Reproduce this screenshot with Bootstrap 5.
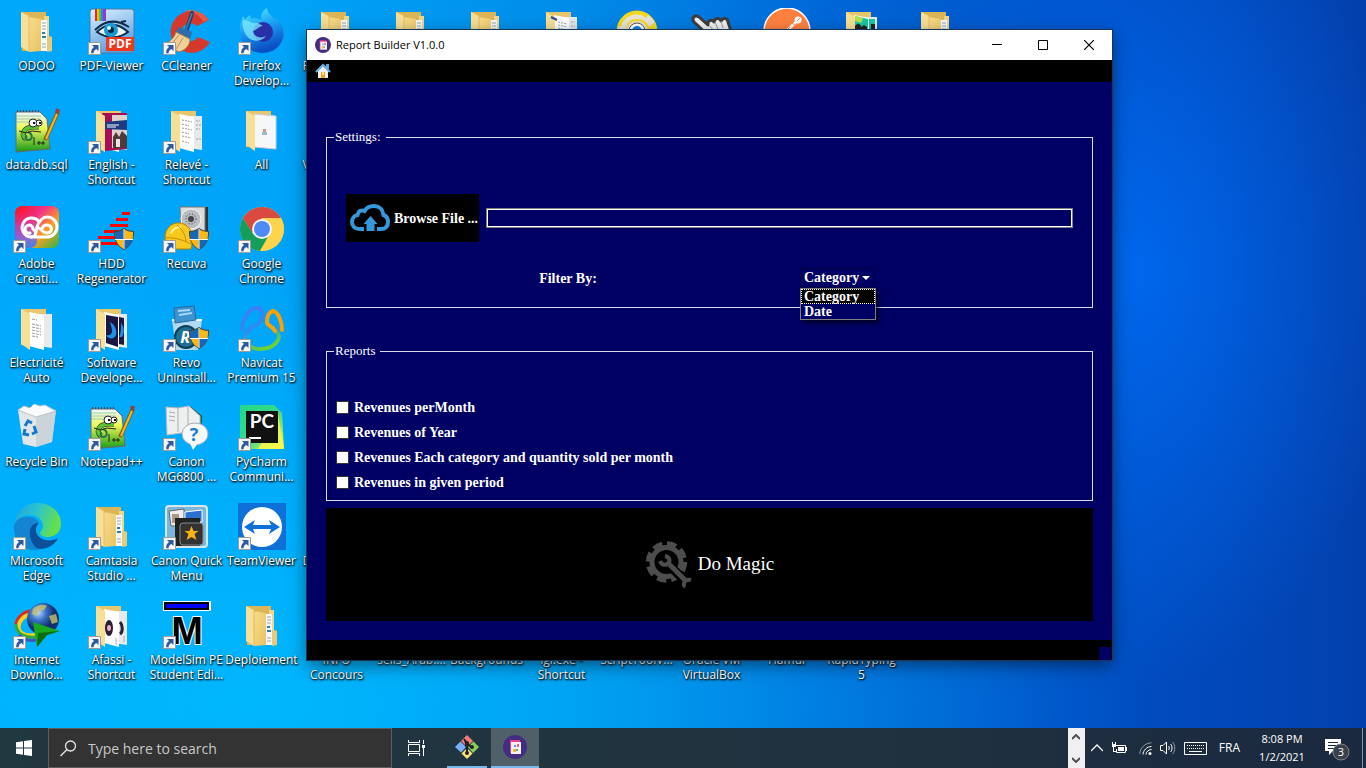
<!DOCTYPE html>
<html lang="en">
<head>
<meta charset="utf-8">
<meta name="viewport" content="width=device-width, initial-scale=1">
<title>Report Builder V1.0.0</title>
<link href="https://cdn.jsdelivr.net/npm/bootstrap@5.3.0/dist/css/bootstrap.min.css" rel="stylesheet">
<style>
  body { font-family: "Open Sans", "Noto Sans", sans-serif; font-size: 12px; }
  svg { display: block; flex: none; }
  .wallpaper {
    background:
      radial-gradient(ellipse 260px 420px at 1140px 270px, rgba(0,112,250,.75), rgba(0,90,225,0)),
      radial-gradient(ellipse 900px 420px at 250px 700px, rgba(0,190,255,.7), rgba(0,170,255,0)),
      linear-gradient(to right, #00a8fb 0, #00a4f8 20%, #008ce9 42%, #0068d8 60%, #0050c6 78%, #0340ae 100%);
  }
  .desk-row { margin-left: -1px; }
  .desk-item { width: 75px; height: 99px; padding-top: 8px; color: #fff; text-decoration: none; flex: none; }
  .desk-item span { width: 78px; margin-top: 2px; line-height: 15px; font-size: 12px; text-align: center; text-shadow: 1px 1px 2px #000, 0 1px 2px rgba(0,0,0,.8); white-space: nowrap; }
  .desk-item .peek { text-align: left; padding-left: 5px; }

  .app-window { left: 307px; right: 254px; top: 30px; background: #000064; color: #fff; font-family: "Liberation Serif", serif; box-shadow: 0 0 0 1px #16365c, 0 5px 16px rgba(0,0,0,.5); }
  .title-strip { height: 30px; background: #fff; color: #000; font-family: "Open Sans", "Noto Sans", sans-serif; font-size: 11px; }
  .title-strip .title-text { margin-left: 5px; }
  .win-btn { width: 46px; height: 30px; border: 0; background: transparent; padding: 0; }
  .tool-strip { height: 22px; background: #000; }
  .tool-strip button { border: 0; background: transparent; padding: 0; }
  .app-body { padding: 46px 19px 19px; }
  .group-box { border: 1px solid #dcdce6; }
  .group-box legend { float: none; width: auto; margin: 0 0 0 7px; padding: 0 5px 0 1px; font-size: 13px; line-height: 18px; }
  .settings-box { padding: 48px 19px 17px; font-weight: bold; font-size: 14px; }
  .file-line { gap: 7px; }
  .browse-btn { height: 48px; width: 133px; background: #000; color: #fff; border: 0; padding: 0 4px; gap: 3px; font-weight: bold; white-space: nowrap; }
  .path-box { height: 20px; min-width: 0; background: #000064; color: #fff; border: 1px solid #808080; outline: 1px solid #fff; outline-offset: -2px; border-radius: 0; padding: 0 4px; }
  .filter-line { margin-top: 26px; gap: 10px; line-height: 22px; }
  .combo-wrap { width: 273px; }
  .combo { appearance: none; width: 75px; height: 20px; border: 1px solid #00003c; color: #fff; font-weight: bold; padding: 0 0 0 3px; line-height: 18px; background: #000064 url("data:image/svg+xml,%3Csvg xmlns='http://www.w3.org/2000/svg' width='8' height='4'%3E%3Cpath fill='white' d='M0 0h8L4 4z'/%3E%3C/svg%3E") no-repeat right 4px top 7px; }
  .combo-list { left: 0; top: 20px; width: 76px; border: 1px solid #808080; background: #000064; z-index: 2; box-shadow: 3px 3px 4px rgba(0,0,0,.6); line-height: 15px; }
  .combo-list li { padding: 0 3px; }
  .combo-list .picked { background: #000; outline: 1px dotted #fff; outline-offset: -1px; }
  .reports-box { margin-top: 34px; }
  .checks { padding: 35px 9px 5px; font-weight: bold; font-size: 14px; }
  .checks label { height: 25px; gap: 5px; }
  .checks input { appearance: none; width: 13px; height: 13px; margin: 0; background: #fff; border: 1px solid #333; }
  .magic-btn { margin-top: 7px; height: 113px; background: #000; color: #fff; border: 0; gap: 5px; font-size: 19px; }
  .status-strip { height: 20px; background: #000; }
  .grip { width: 12px; height: 13px; background: #000064; margin-right: 1px; }

  .task-strip { height: 40px; background: linear-gradient(to right, #20383f, #20323f 60%, #1b2940); color: #fff; }
  .task-strip button { border: 0; background: transparent; padding: 0; height: 40px; color: #fff; }
  .search-wrap { width: 344px; background: #333; border: 1px solid #5d5d5d; padding-left: 11px; gap: 11px; }
  .search-wrap input { background: transparent; border: 0; outline: 0; font-size: 14px; padding: 0; color: #fff; }
  .search-wrap input::placeholder { color: #c8c8c8; opacity: 1; }
  .task-strip .running { border-bottom: 2px solid #76b9ed; }
  .task-strip .active-task { background: #4f6068; }
  .mini-scroll { width: 17px; background: #f0f0f0; padding: 6px 0 5px; }
  .tray { padding: 0 4px 0 6px; }
  .clock { line-height: 18px; width: 68px; font-size: 11px; }
  .desk-edge { width: 4px; border-left: 1px solid #8792a0; }
</style>
</head>
<body class="m-0">

<svg width="0" height="0" class="position-absolute" aria-hidden="true">
  <defs>
    <linearGradient id="gFold" x1="0" x2="1" y2="1"><stop stop-color="#f9dd8c"/><stop offset="1" stop-color="#e8c463"/></linearGradient>
    <linearGradient id="gFox" y2="1" x2=".3"><stop stop-color="#5cf0ff"/><stop offset=".5" stop-color="#1aa0f5"/><stop offset="1" stop-color="#0b4fc4"/></linearGradient>
    <linearGradient id="gPdf" x2=".4" y2="1"><stop stop-color="#dff0ff"/><stop offset="1" stop-color="#5aa0e0"/></linearGradient>
    <linearGradient id="gCc" x2="1" y2="1"><stop stop-color="#f11"/><stop offset=".35" stop-color="#f2308b"/><stop offset=".65" stop-color="#f9a11e"/><stop offset="1" stop-color="#2bb24c"/></linearGradient>
    <linearGradient id="gCcL" x2="0" y2="1"><stop stop-color="#f00" stop-opacity="0"/><stop offset=".5" stop-color="#a050e0" stop-opacity=".5"/><stop offset="1" stop-color="#3a80f5"/></linearGradient>
    <linearGradient id="gEdge" x2="1" y2=".3"><stop stop-color="#1ba2e2"/><stop offset=".5" stop-color="#2bc3d2"/><stop offset="1" stop-color="#64e04c"/></linearGradient>
    <linearGradient id="gGrass" y2="1" x2="0"><stop stop-color="#eef6ff"/><stop offset=".4" stop-color="#f0f85a"/><stop offset="1" stop-color="#139a16"/></linearGradient>
    <linearGradient id="gNav" gradientUnits="userSpaceOnUse" x1="10" y1="4" x2="26" y2="44"><stop stop-color="#3d7dfb"/><stop offset=".5" stop-color="#2a8ef0"/><stop offset="1" stop-color="#6cd332"/></linearGradient>
    <linearGradient id="gPy" x2="1" y2="1"><stop stop-color="#21d789"/><stop offset=".5" stop-color="#3bd98a"/><stop offset="1" stop-color="#fcf84a"/></linearGradient>
    <radialGradient id="gGlobe" cx=".35" cy=".3"><stop stop-color="#b8dcff"/><stop offset=".5" stop-color="#3a72c8"/><stop offset="1" stop-color="#12306c"/></radialGradient>
    <symbol id="arrow" viewBox="0 0 13 13"><path fill="#f6f6f6" stroke="#9c9c9c" d="M.5.5h12v12H.5z"/><path fill="#2c5aa0" d="M4 3h6.500v6L8.400 7C6.500 8 5.600 9.200 5.600 11.200H3.200C3 8.500 4 6.400 6 5z"/></symbol>
    <symbol id="shield" viewBox="0 0 20 22"><path fill="#444" d="M10 0c3 2 6 3 10 3 .3 9-3 15-10 19C3 18-.3 12 0 3c4 0 7-1 10-3z"/><path fill="#1767b5" d="M9.500 1.500v9.500H1.500C1.100 9 1 6.500 1 4c3.500 0 6-1 8.500-2.500zM10.500 12H18c-1.300 4-4 6.800-7.500 8.800z"/><path fill="#fdb813" d="M10.500 1.500C13 3 15.500 4 19 4c0 2.500-.1 5-.5 7h-8zM9.500 12v8.800C6 18.800 3.300 16 2 12z"/><path stroke="#fff" d="M10 1v20M1 11.500h18"/></symbol>
    <symbol id="folder" viewBox="0 0 48 48"><path fill="#dcb556" d="M8 4h25v5l3 1v18l3 1v14H9z"/><path fill="#f1d687" d="M31 8h5v34h-5z"/><path fill="#f6f8fa" d="M28 12h6v31h-6z"/><path stroke="#9aa7b5" d="M29 15h4M29 18h4M29 21h4M29 36h4M29 39h4"/><path stroke="#2a7fb0" stroke-width="2" d="M29 25h3M29 29h4"/><path fill="#e9ca76" d="M34 28l5 1v14l-5 1z"/><path fill="url(#gFold)" d="M15 9l13 2v32l-12 1z"/><path fill="#f7df95" d="M8 4l8 4v36l-8-5z"/><path stroke="#d4ad50" d="M16 8v36" opacity=".6"/></symbol>
    <symbol id="docs" viewBox="0 0 48 48"><path fill="#e8c66c" d="M8 4h25v36H8z"/><path fill="#e7e9eb" d="M18 9l21 0v34l-14-2z"/><path fill="#fff" d="M16 7l15 3v35l-15-4z"/><path fill="#f7df95" d="M8 4l9 5v36l-9-6z"/></symbol>
    <symbol id="npp" viewBox="0 0 48 48"><path fill="url(#gGrass)" stroke="#667" d="M3 5h24l7 7 3 30-34 3z"/><path stroke="#9cb" d="M4 9h24M4 12h24M4 15h20"/><path stroke="#445" stroke-width="2" stroke-dasharray="1 2" d="M4 4h22"/><path fill="none" stroke="#222" stroke-width="5" d="M13 32c-5-4-3-11 6-12h7"/><path fill="none" stroke="#5bc236" stroke-width="4" d="M13 32c-5-4-3-11 6-12h7"/><path fill="none" stroke="#274" stroke-width="2" d="M15 25c5 2 5 8 0 8-3 0-3-3-1-4"/><path fill="none" stroke="#222" d="M6 24l7 2 6-2 9 1M21 38v-8M26 34v4M24 36h4M30 34v4M28 36h4"/><circle cx="20" cy="16" r="4" fill="#fff" stroke="#222"/><circle cx="26" cy="16" r="3" fill="#fff" stroke="#222"/><path fill="#111" d="M20 15h2v2h-2zM26 15h2v2h-2z"/><path stroke="#8a5a10" stroke-width="4" d="M32 33L45 5"/><path stroke="#f7b81a" stroke-width="2" d="M33 32L44 7"/><path stroke="#9d3b3b" stroke-width="4" d="M44 6l1-4"/></symbol>
    <symbol id="badge" viewBox="0 0 24 24"><circle cx="12" cy="12" r="12" fill="#432d80"/><path fill="#e8408c" d="M7 5h10v13H7z"/><path fill="#f4f1f4" d="M8 7h10v12H8z"/><path fill="#ef5b78" d="M14 9h2v3h-2z"/><path fill="#44a6dc" d="M11 10h2v2h-2z"/><path fill="#f5b52e" d="M10 14h3v3h-3z"/><path fill="#4cb48c" d="M13 14h2v2h-2z"/></symbol>
  </defs>
</svg>

<div class="d-flex flex-column min-vh-100 overflow-hidden">
  <main class="wallpaper flex-grow-1 position-relative overflow-hidden">

    <div class="desk-row d-flex">
      <a href="#" class="desk-item d-flex flex-column align-items-center"><svg width="48" height="48"><use href="#folder"/></svg><span>ODOO</span></a>
      <a href="#" class="desk-item d-flex flex-column align-items-center"><svg width="48" height="48" viewBox="0 0 48 48"><rect x="2" y="1" width="44" height="44" rx="3" fill="url(#gPdf)" stroke="#4c79aa"/><path fill="#e22" d="M7 1h2v12H7z"/><path fill="#fb0" d="M9 1h2v12H9z"/><path fill="#4c3" d="M11 1h2v12h-2z"/><path fill="#28e" d="M13 1h2v12h-2z"/><path fill="#93d" d="M15 1h3v12h-3z"/><path fill="#eaf6ff" stroke="#102a4a" stroke-width="2" d="M9 24c8-8 19-11 31 0-9 7-21 7-31 0z"/><path stroke="#102a4a" stroke-width="2" fill="none" d="M7 22c9-9 20-12 34-3M33 14l5-1"/><circle cx="23" cy="22" r="7" fill="#189ad0"/><circle cx="23" cy="22" r="3" fill="#032043"/><circle cx="21" cy="20" r="2" fill="#cff"/><path fill="#ea3a22" d="M18 29h28v14H18z"/><text x="32" y="40" fill="#fff" font-size="12" font-weight="bold" text-anchor="middle">PDF</text><use href="#arrow" x="0" y="34" width="13" height="13"/></svg><span>PDF-Viewer</span></a>
      <a href="#" class="desk-item d-flex flex-column align-items-center"><svg width="48" height="48" viewBox="0 0 48 48"><path fill="#d6392b" d="M46 12A21 21 0 1 0 47 34l-12-5a9 9 0 1 1-1-11z"/><path fill="#eb6a50" d="M46 12C40 4 30 0 20 3c8 0 17 3 20 11z" opacity=".7"/><path stroke="#1c3d66" stroke-width="4" stroke-linecap="round" d="M29 5l-6 19"/><path stroke="#3e75a8" stroke-width="2" d="M29 5l-6 17"/><path fill="#2f6ea8" d="M16 19l13 5-2 7-15-6z"/><path fill="#f1cf98" stroke="#a9783a" d="M13 24l14 7c0 6-4 11-11 13L1 36c6-2 10-6 12-12z"/><path stroke="#b98c50" d="M16 27L7 38M20 30l-7 11"/><use href="#arrow" x="0" y="34" width="13" height="13"/></svg><span>CCleaner</span></a>
      <a href="#" class="desk-item d-flex flex-column align-items-center"><svg width="48" height="48" viewBox="0 0 48 48"><path fill="url(#gFox)" d="M5 8l2 3 5-4 1 4c3-1 7-1 10 1C22 7 25 2 29 0c1 6 5 8 8 12l1-2c6 6 9 13 7 20-3 10-11 15-21 15S3 38 2 27C1 20 3 13 5 8z"/><circle cx="25" cy="24" r="10" fill="#2a2fa8"/><path fill="#7feaff" d="M5 12c6 0 8 4 15 3l5 3c-4 0-6 4-10 5 1 6 7 8 13 5-4 6-15 7-20-1-3-5-4-10-3-15z" opacity=".75"/><use href="#arrow" x="0" y="34" width="13" height="13"/></svg><span>Firefox<br>Develop...</span></a>
      <a href="#" class="desk-item d-flex flex-column align-items-center"><svg width="48" height="48"><use href="#folder"/></svg><span class="peek">P</span></a>
      <a href="#" class="desk-item d-flex flex-column align-items-center"><svg width="48" height="48"><use href="#folder"/></svg></a>
      <a href="#" class="desk-item d-flex flex-column align-items-center"><svg width="48" height="48"><use href="#folder"/></svg></a>
      <a href="#" class="desk-item d-flex flex-column align-items-center"><svg width="48" height="48" viewBox="0 0 48 48"><use href="#docs"/><path stroke="#234e9c" stroke-width="2" d="M13 9l6 3"/><path stroke="#9aa" stroke-dasharray="2 1" d="M20 14l9 2M20 17l9 2M20 20l9 2M33 14h4M33 18h4"/></svg></a>
      <a href="#" class="desk-item d-flex flex-column align-items-center"><svg width="48" height="48" viewBox="0 0 48 48"><circle cx="24" cy="23" r="20" fill="#e6e4d8" stroke="#e0c828"/><path fill="#f6d91f" d="M13 21C14 14 18 11 24 11s10 3 12 8l6-5 1 7-8 3a11 11 0 0 0-22 0zM4 20C6 10 14 3 24 3c5 0 9 2 12 4l-3 3C24 3 12 7 8 18z"/><circle cx="24" cy="23" r="8" fill="#fff" stroke="#654"/><circle cx="24" cy="23" r="5" fill="#0b86e2"/></svg></a>
      <a href="#" class="desk-item d-flex flex-column align-items-center"><svg width="48" height="48" viewBox="0 0 48 48"><path fill="#f1f1ef" stroke="#3d3d3f" stroke-width="3" stroke-linejoin="round" d="M21 28L6 14c-3-4 1-8 5-5l9 8c-1-5 4-6 6-3 1-5 6-4 7-1 2-4 7-3 7 1l4 12-5 12H26z"/><path stroke="#999" d="M22 18l4 5M27 14l3 7M33 13l2 7"/></svg></a>
      <a href="#" class="desk-item d-flex flex-column align-items-center"><svg width="48" height="48" viewBox="0 0 48 48"><circle cx="24" cy="23" r="23" fill="#ff8140" stroke="#fff" stroke-width="1.500"/><circle cx="35" cy="12" r="3.500" fill="#fff"/><path stroke="#fff" stroke-width="3" stroke-linecap="round" d="M32 15L14 32"/><path stroke="#ff8140" d="M29 15l5 4M34 13l3-3M27 19L15 31"/></svg></a>
      <a href="#" class="desk-item d-flex flex-column align-items-center"><svg width="48" height="48" viewBox="0 0 48 48"><use href="#docs"/><path fill="#1cc8a0" d="M17 8l13 3v33l-13-3zM31 11h6v30h-6z"/><path fill="#b6e24a" d="M17 8l8 2-2 5-6-2z"/><path fill="#222" d="M17 18c3-4 6-2 6 1l3-2 3 2v10l-12-3zM33 16h4v9h-4z"/></svg></a>
      <a href="#" class="desk-item d-flex flex-column align-items-center"><svg width="48" height="48"><use href="#folder"/></svg></a>
    </div>

    <div class="desk-row d-flex">
      <a href="#" class="desk-item d-flex flex-column align-items-center"><svg width="48" height="48"><use href="#npp"/></svg><span>data.db.sql</span></a>
      <a href="#" class="desk-item d-flex flex-column align-items-center"><svg width="48" height="48" viewBox="0 0 48 48"><use href="#docs"/><path fill="#a80e52" d="M14 6h25v36l-22 2z"/><path fill="#ded3cc" d="M24 8h15v33H24z"/><path fill="#1d3b7e" d="M16 15l23-2v10l-23-1z"/><path stroke="#fff" d="M19 18h12M19 20h9"/><path fill="#503a38" d="M25 30l3-5 3 5 3-6 5 5v12H25z"/><path fill="#e9e4e8" d="M28 32h4v8h-4z"/><path fill="#f7df95" d="M8 4l9 5v36l-9-6z"/><use href="#arrow" x="0" y="34" width="13" height="13"/></svg><span>English -<br>Shortcut</span></a>
      <a href="#" class="desk-item d-flex flex-column align-items-center"><svg width="48" height="48" viewBox="0 0 48 48"><use href="#docs"/><path stroke="#9a9a9a" stroke-dasharray="2 1" d="M19 13l10 2M19 17l7 2M19 21l10 2M19 25l7 2M19 29l9 2M19 34l7 2M33 14h4M33 18h5M33 22h4M33 32h5"/><use href="#arrow" x="0" y="34" width="13" height="13"/></svg><span>Relevé -<br>Shortcut</span></a>
      <a href="#" class="desk-item d-flex flex-column align-items-center"><svg width="48" height="48" viewBox="0 0 48 48"><path fill="#e8c66c" d="M8 4h25v36H8z"/><path fill="#f5f7f9" stroke="#ccd" d="M16 7l22 2v33l-22-2z"/><path fill="#f7df95" d="M8 4l9 5v35l-9-6z"/><path fill="#c98" d="M25 22h3v3h-3z"/><path fill="#9bc" d="M24 25h5v3h-5z"/></svg><span>All</span></a>
      <a href="#" class="desk-item d-flex flex-column align-items-center"><svg width="48" height="48"><use href="#folder"/></svg><span class="peek">V</span></a>
    </div>

    <div class="desk-row d-flex">
      <a href="#" class="desk-item d-flex flex-column align-items-center"><svg width="48" height="48" viewBox="0 0 48 48"><rect x="2" width="44" height="42" rx="7" fill="url(#gCc)"/><rect x="2" width="22" height="42" rx="7" fill="url(#gCcL)"/><g fill="none" stroke="#fff" stroke-width="3" stroke-linecap="round"><path d="M27 31h-9A9.500 9.500 0 1 1 26 15.500"/><path d="M23 26l-3-3a4 4 0 1 0-3 4"/><path d="M18 31l4-1 2-9c2-6 6-10 10-10a10 10 0 0 1 0 20h-6"/><path d="M29 23c1-4 5-5 8-3 3 3 1 7-3 7-3 0-5-2-8-5"/></g><use href="#arrow" x="0" y="34" width="13" height="13"/></svg><span>Adobe<br>Creati...</span></a>
      <a href="#" class="desk-item d-flex flex-column align-items-center"><svg width="48" height="48" viewBox="0 0 48 48"><path fill="#f00" d="M34 6h8v3h-8zM28 12h12v3H28zM22 18h18v3H22zM16 24h22v3H16zM10 30h26v3H10zM8 36h28v3H8z"/><use href="#shield" x="26" y="22" width="20" height="22"/><use href="#arrow" x="0" y="34" width="13" height="13"/></svg><span>HDD<br>Regenerator</span></a>
      <a href="#" class="desk-item d-flex flex-column align-items-center"><svg width="48" height="48" viewBox="0 0 48 48"><path fill="#333" d="M41 1h4v27h-4z"/><path fill="#d9dcdf" stroke="#777" d="M17 1h25v28H18z"/><circle cx="28" cy="13" r="10" fill="#b8bdc2" stroke="#f6f6f6"/><circle cx="28" cy="13" r="3" fill="#444"/><circle cx="28" cy="13" r="5" fill="none" stroke="#333" stroke-dasharray="1 2"/><path fill="#f7c81d" stroke="#b68300" d="M2 32c0-10 7-16 15-15 8 1 12 7 13 16l-2 10H14C8 42 2 38 2 32z"/><path fill="none" stroke="#fff3a0" stroke-width="2" d="M8 27c2-4 5-6 10-6"/><path fill="none" stroke="#c38f00" d="M14 19c5 4 8 9 9 16M2 32c8-1 16 1 26 6"/><use href="#shield" x="26" y="22" width="20" height="22"/><use href="#arrow" x="0" y="34" width="13" height="13"/></svg><span>Recuva</span></a>
      <a href="#" class="desk-item d-flex flex-column align-items-center"><svg width="48" height="48" viewBox="0 0 48 48"><circle cx="24" cy="23" r="22" fill="#fdd44c"/><path fill="#db4a3f" d="M5 12a22 22 0 0 1 38 0H24L14 27z"/><path fill="#159e5b" d="M5 12a22 22 0 0 0 17 33l9-16-16-1z"/><path fill="#fdd44c" d="M43 12a22 22 0 0 1-21 33l11-19-2-14z"/><circle cx="24" cy="23" r="10" fill="#f4f4f4"/><circle cx="24" cy="23" r="8" fill="#4c8bf5"/><use href="#arrow" x="0" y="34" width="13" height="13"/></svg><span>Google<br>Chrome</span></a>
    </div>

    <div class="desk-row d-flex">
      <a href="#" class="desk-item d-flex flex-column align-items-center"><svg width="48" height="48" viewBox="0 0 48 48"><use href="#docs"/><path stroke="#999" stroke-dasharray="3 1" d="M19 14l5 1M19 19l9 2M19 22l9 2M19 25l9 2M19 28l9 2M19 31l6 1"/></svg><span>Electricité<br>Auto</span></a>
      <a href="#" class="desk-item d-flex flex-column align-items-center"><svg width="48" height="48" viewBox="0 0 48 48"><use href="#docs"/><path fill="#1a1842" d="M18 10l12 2v30l-12-4zM31 12l5 1v27l-5-1z"/><path fill="#1d8fe8" d="M22 17c5 3 7 8 6 13-2 5-8 4-10 0 3 1 6 0 6-4 0-3-1-5-2-9zM33 18c3 4 4 9 1 14h-3c2-4 2-8 2-14z"/><use href="#arrow" x="0" y="34" width="13" height="13"/></svg><span>Software<br>Develope...</span></a>
      <a href="#" class="desk-item d-flex flex-column align-items-center"><svg width="48" height="48" viewBox="0 0 48 48"><path fill="#cfe1ee" opacity=".85" d="M9 14h30l-4 31H13z"/><path stroke="#f4faff" stroke-width="2" d="M9 15h30"/><path fill="#3c93cf" stroke="#246a9e" d="M11 3l20-2 2 14-21 3z"/><path stroke="#a9d8f6" stroke-width="2" d="M15 6l12-1M16 10l13-2"/><circle cx="23" cy="32" r="11" fill="#1d6f94" stroke="#0c3e58" stroke-width="2"/><text x="22" y="38" fill="#fff" font-size="16" font-weight="bold" font-style="italic" text-anchor="middle">R</text><use href="#shield" x="26" y="22" width="20" height="22"/><use href="#arrow" x="0" y="34" width="13" height="13"/></svg><span>Revo<br>Uninstall...</span></a>
      <a href="#" class="desk-item d-flex flex-column align-items-center"><svg width="48" height="48" viewBox="0 0 48 48"><g fill="none" stroke-width="4" stroke-linecap="round" stroke-linejoin="round"><path stroke="url(#gNav)" d="M4 25C4 14 12 3 19 3c5 0 6 5 5 10-1 6-9 7-13 12-4 4-5 8-3 12 6 10 26 9 32-2 2-4 0-7-2-9"/><path stroke="#ffa000" d="M44 25c0-9-4-18-9-19-4 1-6 6-6 11 0 4 5 3 8 9"/></g><use href="#arrow" x="0" y="34" width="13" height="13"/></svg><span>Navicat<br>Premium 15</span></a>
    </div>

    <div class="desk-row d-flex">
      <a href="#" class="desk-item d-flex flex-column align-items-center"><svg width="48" height="48" viewBox="0 0 48 48"><path fill="#e0e6ea" d="M5 6l18 5 20-5-4 32-16 5-13-3z"/><path fill="#c2ccd2" d="M23 11l20-5-4 32-16 5z" opacity=".7"/><path fill="#f9fbfc" stroke="#b9c4ca" d="M5 6l6-4 6 2 4-4 6 2 5-1 11 6-20 6z"/><path fill="none" stroke="#1677d2" stroke-width="3" d="M12 22l3-5 4 2M21 22l2 6-4 2M16 31l-5-1 1-5"/></svg><span>Recycle Bin</span></a>
      <a href="#" class="desk-item d-flex flex-column align-items-center"><svg width="48" height="48" viewBox="0 0 48 48"><use href="#npp"/><use href="#arrow" x="0" y="34" width="13" height="13"/></svg><span>Notepad++</span></a>
      <a href="#" class="desk-item d-flex flex-column align-items-center"><svg width="48" height="48" viewBox="0 0 48 48"><path fill="#1c5a32" d="M27 2l12 10-1 20-8-3z"/><path fill="#eef0f0" stroke="#b8babc" d="M3 3l12 1 11-2 11 10v22l-12-6-21 3z"/><path stroke="#aaa" d="M15 4v24M6 8l6 1M6 12l6 1M6 16l6 1M25 3v24"/><ellipse cx="32" cy="30" rx="13" ry="11" fill="#f8f9fa" stroke="#aab"/><path fill="#f8f9fa" d="M27 39l3 7 5-7z"/><text x="31" y="37" fill="#1680d8" font-size="18" font-weight="bold" text-anchor="middle">?</text><use href="#arrow" x="0" y="34" width="13" height="13"/></svg><span>Canon<br>MG6800 ...</span></a>
      <a href="#" class="desk-item d-flex flex-column align-items-center"><svg width="48" height="48" viewBox="0 0 48 48"><path fill="url(#gPy)" d="M2 1h34l8 8 2 36H2z"/><path fill="#fcf84a" d="M40 10l6 35H20z" opacity=".8"/><path fill="#111" d="M8 7h32v32H8z"/><text x="24" y="24" fill="#fff" font-family="Lato" font-size="19" font-weight="bold" text-anchor="middle">PC</text><path fill="#fff" d="M11 33h12v2H11z"/><use href="#arrow" x="0" y="34" width="13" height="13"/></svg><span>PyCharm<br>Communi...</span></a>
    </div>

    <div class="desk-row d-flex">
      <a href="#" class="desk-item d-flex flex-column align-items-center"><svg width="48" height="48" viewBox="0 0 48 48"><path fill="url(#gEdge)" d="M1 23C2 9 12 0 24 0c14 0 24 9 24 21 0 8-6 13-13 13-5 0-8-2-8-4s3-3 3-7c0-6-6-11-13-11C9 12 3 16 1 23z"/><path fill="#1483d0" d="M1 23c2-7 8-10 15-9 5 0 9 3 10 6-7-1-10 6-9 13 1 7 4 12 9 14C12 49 0 39 1 23z"/><path fill="#0c4f9a" d="M26 20c-7-1-10 6-9 13 1 7 5 13 10 13 7 0 14-4 17-9 1-1 0-2-1-1-7 3-16 1-19-5-2-4-1-8 2-11z"/><use href="#arrow" x="0" y="34" width="13" height="13"/></svg><span>Microsoft<br>Edge</span></a>
      <a href="#" class="desk-item d-flex flex-column align-items-center"><svg width="48" height="48" viewBox="0 0 48 48"><use href="#folder"/><use href="#arrow" x="0" y="34" width="13" height="13"/></svg><span>Camtasia<br>Studio ...</span></a>
      <a href="#" class="desk-item d-flex flex-column align-items-center"><svg width="48" height="48" viewBox="0 0 48 48"><rect x="3" y="3" width="41" height="41" rx="3" fill="#7cb6da" stroke="#d8e6ee" stroke-width="2"/><path fill="#eee" stroke="#666" d="M6 8l15-2v17H8z"/><path fill="#a98" d="M9 11h7v9H9z"/><path fill="#2b6fd0" stroke="#fff" d="M22 9l17-2v12H22z"/><path fill="#222" d="M12 15h25v28H12z"/><rect x="17" y="20" width="23" height="22" rx="3" fill="#333" stroke="#888"/><path fill="#fbb216" d="M28.500 23l2 5h5l-4 3 2 6-5-3-5 3 2-6-4-3h5z"/><use href="#arrow" x="0" y="34" width="13" height="13"/></svg><span>Canon Quick<br>Menu</span></a>
      <a href="#" class="desk-item d-flex flex-column align-items-center"><svg width="48" height="48" viewBox="0 0 48 48"><path fill="#0e70d8" d="M0 0h48v47H0z"/><circle cx="24" cy="24" r="20" fill="#fff"/><path fill="#0e70d8" d="M6 24l11-7-2 5h18l-2-5 11 7-11 7 2-5H15l2 5z"/><use href="#arrow" x="0" y="34" width="13" height="13"/></svg><span>TeamViewer</span></a>
      <a href="#" class="desk-item d-flex flex-column align-items-center"><svg width="48" height="48"><use href="#folder"/></svg><span class="peek">D</span></a>
    </div>

    <div class="desk-row d-flex">
      <a href="#" class="desk-item d-flex flex-column align-items-center"><svg width="48" height="48" viewBox="0 0 48 48"><path fill="none" stroke="#e22a1b" stroke-width="3" d="M24 9C12 7 4 15 3 22"/><path fill="none" stroke="#f8d21c" stroke-width="4" d="M23 13C12 10 4 20 6 28c3 5 10 6 16 5"/><path fill="none" stroke="#35a83a" stroke-width="3" d="M3 22c0 10 9 14 20 13"/><path fill="none" stroke="#3a55c8" stroke-width="3" d="M6 33c5 6 12 6 18 5"/><circle cx="30" cy="17" r="16" fill="url(#gGlobe)"/><path fill="#c9c06a" d="M20 7c5-5 11-5 14-3l-3 4-5 1-2 5-5-2zM36 14l7-2 2 8-6 2z" opacity=".8"/><path fill="#17a81c" d="M20 20l27 9-13 4-10 12z"/><path fill="#0b6c10" d="M47 29l-13 4-10 12 1-14z"/><use href="#arrow" x="0" y="34" width="13" height="13"/></svg><span>Internet<br>Downlo...</span></a>
      <a href="#" class="desk-item d-flex flex-column align-items-center"><svg width="48" height="48" viewBox="0 0 48 48"><use href="#docs"/><ellipse cx="21" cy="26" rx="4" ry="8" fill="#2a2030"/><ellipse cx="21" cy="26" rx="2" ry="3" fill="#eac"/><path fill="none" stroke="#2a2030" stroke-width="3" d="M32 20c3 3 3 10 0 12"/><path stroke="#aac" d="M28 36v7M36 34v6"/><use href="#arrow" x="0" y="34" width="13" height="13"/></svg><span>Afassi -<br>Shortcut</span></a>
      <a href="#" class="desk-item d-flex flex-column align-items-center"><svg width="48" height="48" viewBox="0 0 48 48" class="overflow-visible"><path fill="#fff" d="M0-1h48v10H0z"/><path fill="#00f" stroke="#000" stroke-width="2" d="M2 1h43v6H2z"/><text x="24" y="42" font-family="Liberation Sans" font-size="38" font-weight="bold" text-anchor="middle" stroke="#fff" stroke-width="2" paint-order="stroke">M</text><use href="#arrow" x="0" y="34" width="13" height="13"/></svg><span>ModelSim PE<br>Student Edi...</span></a>
      <a href="#" class="desk-item d-flex flex-column align-items-center"><svg width="48" height="48"><use href="#folder"/></svg><span>Deploiement</span></a>
      <a href="#" class="desk-item d-flex flex-column align-items-center"><svg width="48" height="48"><use href="#folder"/></svg><span>INFO<br>Concours</span></a>
      <a href="#" class="desk-item d-flex flex-column align-items-center"><svg width="48" height="48"><use href="#folder"/></svg><span>sells_Arab....</span></a>
      <a href="#" class="desk-item d-flex flex-column align-items-center"><svg width="48" height="48"><use href="#folder"/></svg><span>Backgrounds</span></a>
      <a href="#" class="desk-item d-flex flex-column align-items-center"><svg width="48" height="48"><use href="#folder"/></svg><span>igi.exe -<br>Shortcut</span></a>
      <a href="#" class="desk-item d-flex flex-column align-items-center"><svg width="48" height="48"><use href="#folder"/></svg><span>ScriptToolV...</span></a>
      <a href="#" class="desk-item d-flex flex-column align-items-center"><svg width="48" height="48"><use href="#folder"/></svg><span>Oracle VM<br>VirtualBox</span></a>
      <a href="#" class="desk-item d-flex flex-column align-items-center"><svg width="48" height="48"><use href="#folder"/></svg><span>Hamdi</span></a>
      <a href="#" class="desk-item d-flex flex-column align-items-center"><svg width="48" height="48"><use href="#folder"/></svg><span>RapidTyping<br>5</span></a>
    </div>

    <section class="app-window position-absolute">
      <header class="title-strip d-flex align-items-center">
        <svg class="ms-2" width="16" height="16"><use href="#badge"/></svg>
        <span class="title-text flex-grow-1">Report Builder V1.0.0</span>
        <button class="win-btn d-flex align-items-center justify-content-center" aria-label="Minimize"><svg width="10" height="10"><path stroke="#000" d="M0 4.500h10"/></svg></button>
        <button class="win-btn d-flex align-items-center justify-content-center" aria-label="Maximize"><svg width="10" height="10"><path fill="none" stroke="#000" d="M.5.5h9v9h-9z"/></svg></button>
        <button class="win-btn d-flex align-items-center justify-content-center" aria-label="Close"><svg width="10" height="10"><path stroke="#000" stroke-width="1.200" d="M0 0l10 10M10 0L0 10"/></svg></button>
      </header>
      <div class="tool-strip d-flex align-items-center ps-2">
        <button aria-label="Home"><svg width="16" height="16" viewBox="0 0 16 16"><path fill="#5ba7dc" d="M11 1h3v5h-3z"/><path fill="#eceef0" d="M3 8l5-5 5 5v7H3z"/><path fill="none" stroke="#6cb8ea" stroke-width="2" d="M1 9l7-7 7 7"/><path fill="#f0a41c" d="M6 9h4v6H6z"/><path fill="#ffdf70" d="M7 9h2v3H7z"/></svg></button>
      </div>
      <form class="app-body" onsubmit="return false">
        <fieldset class="group-box">
          <legend>Settings:</legend>
          <div class="settings-box">
            <div class="file-line d-flex align-items-center">
              <button type="button" class="browse-btn d-flex align-items-center flex-shrink-0"><svg width="41" height="28" viewBox="0 0 41 28"><path fill="none" stroke="#3498db" stroke-width="4" d="M14 25H9.500C4.500 25 2 21.500 2 18c0-4 2.500-6.500 5.500-7C8 7 11 5.500 14.500 7 17 2.500 21 2 24 2c5 0 9 3.500 9.500 9 3 1 4.500 3.500 4.500 7 0 4-2.500 7-7 7h-4"/><path fill="#3498db" d="M20.500 12l7 8h-3v7h-8v-7h-3z"/></svg>Browse File ...</button>
              <input type="text" class="path-box flex-grow-1" aria-label="File path">
            </div>
            <div class="filter-line d-flex">
              <label for="filterBy" class="flex-grow-1 text-center">Filter By:</label>
              <div class="combo-wrap position-relative">
                <select id="filterBy" class="combo d-block"><option>Category</option><option>Date</option></select>
                <ul class="combo-list list-unstyled position-absolute m-0"><li class="picked">Category</li><li>Date</li></ul>
              </div>
            </div>
          </div>
        </fieldset>
        <fieldset class="group-box reports-box">
          <legend>Reports</legend>
          <div class="checks">
            <label class="d-flex align-items-center"><input type="checkbox">Revenues perMonth</label>
            <label class="d-flex align-items-center"><input type="checkbox">Revenues of Year</label>
            <label class="d-flex align-items-center"><input type="checkbox">Revenues Each category and quantity sold per month</label>
            <label class="d-flex align-items-center"><input type="checkbox">Revenues in given period</label>
          </div>
        </fieldset>
        <button type="button" class="magic-btn w-100 d-flex align-items-center justify-content-center"><svg width="48" height="48" viewBox="0 0 48 48"><g fill="none" stroke="#4d4d4d"><circle cx="21.500" cy="21" r="14.500" stroke-width="5"/><circle cx="21.500" cy="21" r="18.500" stroke-width="4.500" stroke-dasharray="9.530 5"/></g><path stroke="#000" stroke-width="9" d="M26 26l15 15"/><path stroke="#4d4d4d" stroke-width="5" d="M22 21l18 18"/><path fill="none" stroke="#4d4d4d" stroke-width="4" d="M20 15c5 1 6 6 2 8-3 2-6 0-7-3M46 39c-4-1-7 1-7 4 0 2 0 2-1 3"/></svg>Do Magic</button>
      </form>
      <footer class="status-strip d-flex justify-content-end align-items-end"><div class="grip"></div></footer>
    </section>
  </main>

  <nav class="task-strip d-flex align-items-stretch" aria-label="Taskbar">
    <button class="d-flex align-items-center justify-content-center px-3" aria-label="Start"><svg width="16" height="16" viewBox="0 0 16 16"><path fill="#fff" d="M0 2.200l7-1V7.600H0zM8 1l8-1v7.600H8zM0 8.500h7v6.300l-7-1zM8 8.500h8V16l-8-1.100z"/></svg></button>
    <label class="search-wrap d-flex align-items-center"><svg width="17" height="17" viewBox="0 0 17 17"><circle cx="10.500" cy="6" r="5" fill="none" stroke="#e6e6e6" stroke-width="1.300"/><path stroke="#e6e6e6" stroke-width="1.400" d="M7 9.500L.5 16"/></svg><input type="text" class="flex-grow-1" placeholder="Type here to search" aria-label="Search"></label>
    <button class="d-flex align-items-center ps-3 pe-3 me-1" aria-label="Task View"><svg width="19" height="16" viewBox="0 0 19 16"><path fill="none" stroke="#fff" d="M.5 0v2.500h11V0M.5 4.500h11v7H.5zM.5 16v-2.500h11V16M15.500 0v4M15.500 8v8"/><path fill="#fff" d="M14 5h3v3h-3z"/></svg></button>
    <button class="running d-flex align-items-center px-2" aria-label="Git"><svg width="24" height="24" viewBox="0 0 24 24"><path fill="#f37d7d" d="M12 0l6 6-6 6-6-6z"/><path fill="#7ab0fa" d="M5.500 6.500L11 12l-5 5.500L0 12z"/><path fill="#88d160" d="M18.500 6.500L24 12l-6 6-5-6z"/><path fill="#fbe27a" d="M12 13l5.500 5.500L12 24l-5.500-5.500z"/><path stroke="#222" stroke-width="2" d="M9 4l3 4v10M12 8l4 4"/><g fill="#222"><circle cx="12" cy="8" r="2"/><circle cx="17" cy="12" r="2"/><circle cx="12" cy="18" r="2"/></g></svg></button>
    <button class="running active-task d-flex align-items-center ms-1 px-2" aria-label="Report Builder"><svg class="mx-1" width="24" height="24"><use href="#badge"/></svg></button>
    <div class="mini-scroll d-flex flex-column justify-content-between align-items-center ms-auto"><svg width="8" height="6"><path fill="none" stroke="#505050" stroke-width="2" d="M0 5l4-4 4 4"/></svg><svg width="8" height="6"><path fill="none" stroke="#505050" stroke-width="2" d="M0 1l4 4 4-4"/></svg></div>
    <div class="tray d-flex align-items-center">
      <button class="pe-2" aria-label="Show hidden icons"><svg width="12" height="8"><path fill="none" stroke="#fff" stroke-width="1.300" d="M0 7l6-6 6 6"/></svg></button>
      <button class="me-2" aria-label="Battery"><svg width="16" height="12" viewBox="0 0 16 12"><path fill="none" stroke="#fff" d="M5 3.500h9.500v7h-9V7"/><path fill="#fff" d="M7 5h6v4H7zM15 5h1v4h-1zM1 0h1v2h2V0h1v5H1zM2 5h1v4h3v1H2z"/></svg></button>
      <button class="mx-1" aria-label="Network"><svg width="13" height="13" viewBox="0 0 13 13"><g fill="none" stroke="#fff"><path opacity=".5" d="M.7 12C1 6 6 1 12.500.8"/><path d="M4 12.500c0-4 4-8 8.500-8M7 12.500c0-2.500 2.500-5 5.500-5"/></g><circle cx="11" cy="11.500" r="1.500" fill="#fff"/></svg></button>
      <button class="mx-1" aria-label="Volume"><svg width="16" height="14" viewBox="0 0 16 14"><path fill="none" stroke="#fff" d="M.5 4.500H3L6.500 1v12L3 9.500H.5zM8.500 5c1 1 1 3 0 4M10.500 3c2 2 2 6 0 8"/><path fill="none" stroke="#8d97a5" d="M12.500 1c3 3 3 9 0 12"/></svg></button>
      <button class="mx-1" aria-label="Touch keyboard"><svg width="23" height="13" viewBox="0 0 23 13"><path fill="none" stroke="#fff" d="M.5.5h22v12H.5z"/><path stroke="#fff" stroke-dasharray="1 1" d="M3 3.500h17M3 6.500h17"/><path stroke="#fff" d="M5 9.500h13"/></svg></button>
      <button class="ms-2 me-1" aria-label="Language">FRA</button>
      <button class="clock text-center ms-1">8:08 PM<br>1/2/2021</button>
      <button class="ms-2 me-2" aria-label="Notifications, 3 new"><svg width="26" height="26" viewBox="0 0 26 26"><path fill="#fff" d="M1 4h16v12h-8l-4 4v-4H1z"/><path stroke="#1b2940" d="M4 7.500h10M4 10.500h10M4 13.500h6"/><circle cx="17" cy="17" r="8" fill="#3b4149" stroke="#7b838c"/><text x="17" y="21" fill="#fff" font-size="11" text-anchor="middle">3</text></svg></button>
    </div>
    <div class="desk-edge"></div>
  </nav>
</div>
<script src="https://cdn.jsdelivr.net/npm/bootstrap@5.3.0/dist/js/bootstrap.bundle.min.js"></script>
</body>
</html>
